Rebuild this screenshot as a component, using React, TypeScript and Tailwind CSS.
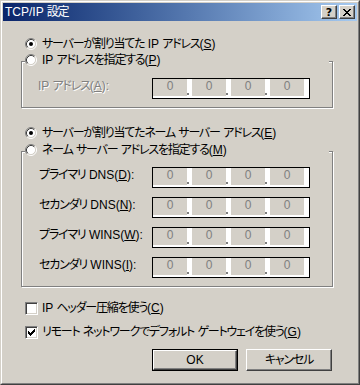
import React from "react";

const FONT = "[font-family:'Liberation_Sans','Noto_Sans_CJK_JP',sans-serif] [font-feature-settings:'palt']";
const DIS = "text-[#808080] [text-shadow:1px_1px_0_#ffffff]";

function J({ children }: { children: React.ReactNode }) {
  return <span className="tracking-[-1.2px]">{children}</span>;
}

function Radio({ checked }: { checked?: boolean }) {
  return (
    <svg width="12" height="12" viewBox="0 0 12 12" className="shrink-0">
      <circle cx="6" cy="6" r="4.5" fill="#ffffff" />
      <path d="M2.11 9.89 A5.5 5.5 0 0 1 9.89 2.11" stroke="#808080" fill="none" />
      <path d="M9.89 2.11 A5.5 5.5 0 0 1 2.11 9.89" stroke="#ffffff" fill="none" />
      <path d="M2.82 9.18 A4.5 4.5 0 0 1 9.18 2.82" stroke="#404040" fill="none" />
      <path d="M9.18 2.82 A4.5 4.5 0 0 1 2.82 9.18" stroke="#d4d0c8" fill="none" />
      {checked && <circle cx="6" cy="6" r="2" fill="#000000" />}
    </svg>
  );
}

function Check({ checked }: { checked?: boolean }) {
  return (
    <div className="w-[13px] h-[13px] shrink-0 bg-white border border-t-[#808080] border-l-[#808080] border-r-white border-b-white shadow-[inset_1px_1px_0_#404040,inset_-1px_-1px_0_#d4d0c8] flex items-center justify-center">
      {checked && (
        <svg width="7" height="7" viewBox="0 0 7 7" shapeRendering="crispEdges">
          <rect x="6" y="0" width="1" height="1" fill="#000" />
          <rect x="5" y="1" width="2" height="1" fill="#000" />
          <rect x="0" y="2" width="1" height="1" fill="#000" />
          <rect x="4" y="2" width="3" height="1" fill="#000" />
          <rect x="0" y="3" width="2" height="1" fill="#000" />
          <rect x="3" y="3" width="3" height="1" fill="#000" />
          <rect x="0" y="4" width="5" height="1" fill="#000" />
          <rect x="1" y="5" width="3" height="1" fill="#000" />
          <rect x="2" y="6" width="1" height="1" fill="#000" />
        </svg>
      )}
    </div>
  );
}

function Seg() {
  return (
    <div className="w-[34px] h-[17px] bg-[#d4d0c8] text-center text-[#808080] text-[12px] leading-[15px]">
      0
    </div>
  );
}

function Dot() {
  return (
    <div className="w-[5px] h-[17px] flex items-end">
      <div className="w-[2px] h-[2px] bg-[#808080] mb-[1px]" />
    </div>
  );
}

function IpField() {
  return (
    <div className="flex w-[158px] h-[21px] border border-black bg-white shrink-0">
      <Seg />
      <Dot />
      <Seg />
      <Dot />
      <Seg />
      <Dot />
      <Seg />
    </div>
  );
}

function FieldRow({ label, disabled }: { label: React.ReactNode; disabled?: boolean }) {
  return (
    <div className="flex items-start mt-[9px]">
      <div className={"w-[130px] pl-[17px] mt-[1px] text-[12px] leading-[14px] whitespace-nowrap " + (disabled ? DIS : "text-black")}>
        {label}
      </div>
      <IpField />
    </div>
  );
}

function RadioRow({ checked, children, inGroup }: { checked?: boolean; children: React.ReactNode; inGroup?: boolean }) {
  return (
    <div
      className={
        "flex h-[16px] items-center gap-[5px] text-[12px] leading-[16px] text-black " +
        (inGroup ? "ml-[3px] -mt-[10px] bg-[#d4d0c8] w-[304px] relative" : "ml-[22px] w-fit")
      }
    >
      <Radio checked={checked} />
      <span className="whitespace-nowrap">{children}</span>
    </div>
  );
}

function CheckRow({ checked, children, cls }: { checked?: boolean; children: React.ReactNode; cls: string }) {
  return (
    <div className={"flex h-[16px] items-center gap-[4px] ml-[22px] text-[12px] leading-[16px] text-black " + cls}>
      <Check checked={checked} />
      <span className="whitespace-nowrap">{children}</span>
    </div>
  );
}

function Group({ children, cls }: { children: React.ReactNode; cls: string }) {
  return (
    <div className={"ml-[18px] w-[312px] border border-[#808080] shadow-[1px_1px_0_#ffffff,inset_1px_1px_0_#ffffff] pb-[8px] " + cls}>
      {children}
    </div>
  );
}

function Button({ children, def }: { children: React.ReactNode; def?: boolean }) {
  const inner =
    "flex-1 flex items-center justify-center border border-t-white border-l-white border-r-[#404040] border-b-[#404040] shadow-[inset_-1px_-1px_0_#808080] text-[12px] text-black";
  return (
    <div className={"w-[86px] h-[22px] flex " + (def ? "border border-black" : "")}>
      <div className={inner}>{children}</div>
    </div>
  );
}

function CapBtn({ children }: { children: React.ReactNode }) {
  return (
    <div className="w-[16px] h-[14px] bg-[#d4d0c8] border border-t-white border-l-white border-r-[#404040] border-b-[#404040] shadow-[inset_-1px_-1px_0_#808080] flex items-center justify-center">
      {children}
    </div>
  );
}

export default function App() {
  return (
    <div className={"w-[360px] h-[385px] bg-[#d4d0c8] border border-t-[#d4d0c8] border-l-[#d4d0c8] border-r-[#404040] border-b-[#404040] " + FONT}>
      <div className="w-full h-full border border-t-white border-l-white border-r-[#808080] border-b-[#808080] p-[1px] flex flex-col">
        {/* Title bar */}
        <div className="h-[18px] shrink-0 flex items-center bg-gradient-to-r from-[#0a246a] to-[#a6caf0] pl-[2px] pr-[2px]">
          <span className="text-white text-[12px] leading-[14px] whitespace-nowrap">
            TCP/IP <J>設定</J>
          </span>
          <div className="flex-1" />
          <div className="flex gap-[2px]">
            <CapBtn>
              <span className="text-black font-bold text-[11px] leading-[11px] [font-family:'DejaVu_Sans',sans-serif] [font-feature-settings:normal]">?</span>
            </CapBtn>
            <CapBtn>
              <svg width="8" height="7" viewBox="0 0 8 7" shapeRendering="crispEdges">
                <path d="M0 0h2v1h-2zM6 0h2v1h-2zM1 1h2v1h-2zM5 1h2v1h-2zM2 2h4v1h-4zM3 3h2v1h-2zM2 4h4v1h-4zM1 5h2v1h-2zM5 5h2v1h-2zM0 6h2v1h-2zM6 6h2v1h-2z" fill="#000" />
              </svg>
            </CapBtn>
          </div>
        </div>

        {/* Body */}
        <div className="flex flex-col">
          <div className="mt-[15px]">
            <RadioRow checked>
              <J>サーバーが割り当てた</J> IP <J>アドレス</J>(<u>S</u>)
            </RadioRow>
          </div>
          <Group cls="mt-[9px]">
            <RadioRow inGroup>
              IP <J>アドレスを指定する</J>(<u>P</u>)
            </RadioRow>
            <div className="flex items-start mt-[10px]">
              <div className={"w-[130px] pl-[16px] mt-[1px] text-[12px] leading-[14px] whitespace-nowrap " + DIS}>
                IP <J>アドレス</J>(<u>A</u>):
              </div>
              <IpField />
            </div>
          </Group>

          <div className="mt-[17px]">
            <RadioRow checked>
              <J>サーバーが割り当てたネーム</J> <J>サーバー</J> <J>アドレス</J>(<u>E</u>)
            </RadioRow>
          </div>
          <Group cls="mt-[10px]">
            <RadioRow inGroup>
              <J>ネーム</J> <J>サーバー</J> <J>アドレスを指定する</J>(<u>M</u>)
            </RadioRow>
            <FieldRow label={<><J>プライマリ</J> DNS(<u>D</u>):</>} />
            <FieldRow label={<><J>セカンダリ</J> DNS(<u>N</u>):</>} />
            <FieldRow label={<><J>プライマリ</J> WINS(<u>W</u>):</>} />
            <FieldRow label={<><J>セカンダリ</J> WINS(<u>I</u>):</>} />
          </Group>

          <CheckRow cls="mt-[13px]">
            IP <J>ヘッダー圧縮を使う</J>(<u>C</u>)
          </CheckRow>
          <CheckRow checked cls="mt-[8px]">
            <J>リモート</J> <J>ネットワークでデフォルト</J> <J>ゲートウェイを使う</J>(<u>G</u>)
          </CheckRow>

          <div className="flex gap-[8px] ml-[149px] mt-[9px]">
            <Button def>OK</Button>
            <Button>
              <J>キャンセル</J>
            </Button>
          </div>
        </div>
      </div>
    </div>
  );
}
